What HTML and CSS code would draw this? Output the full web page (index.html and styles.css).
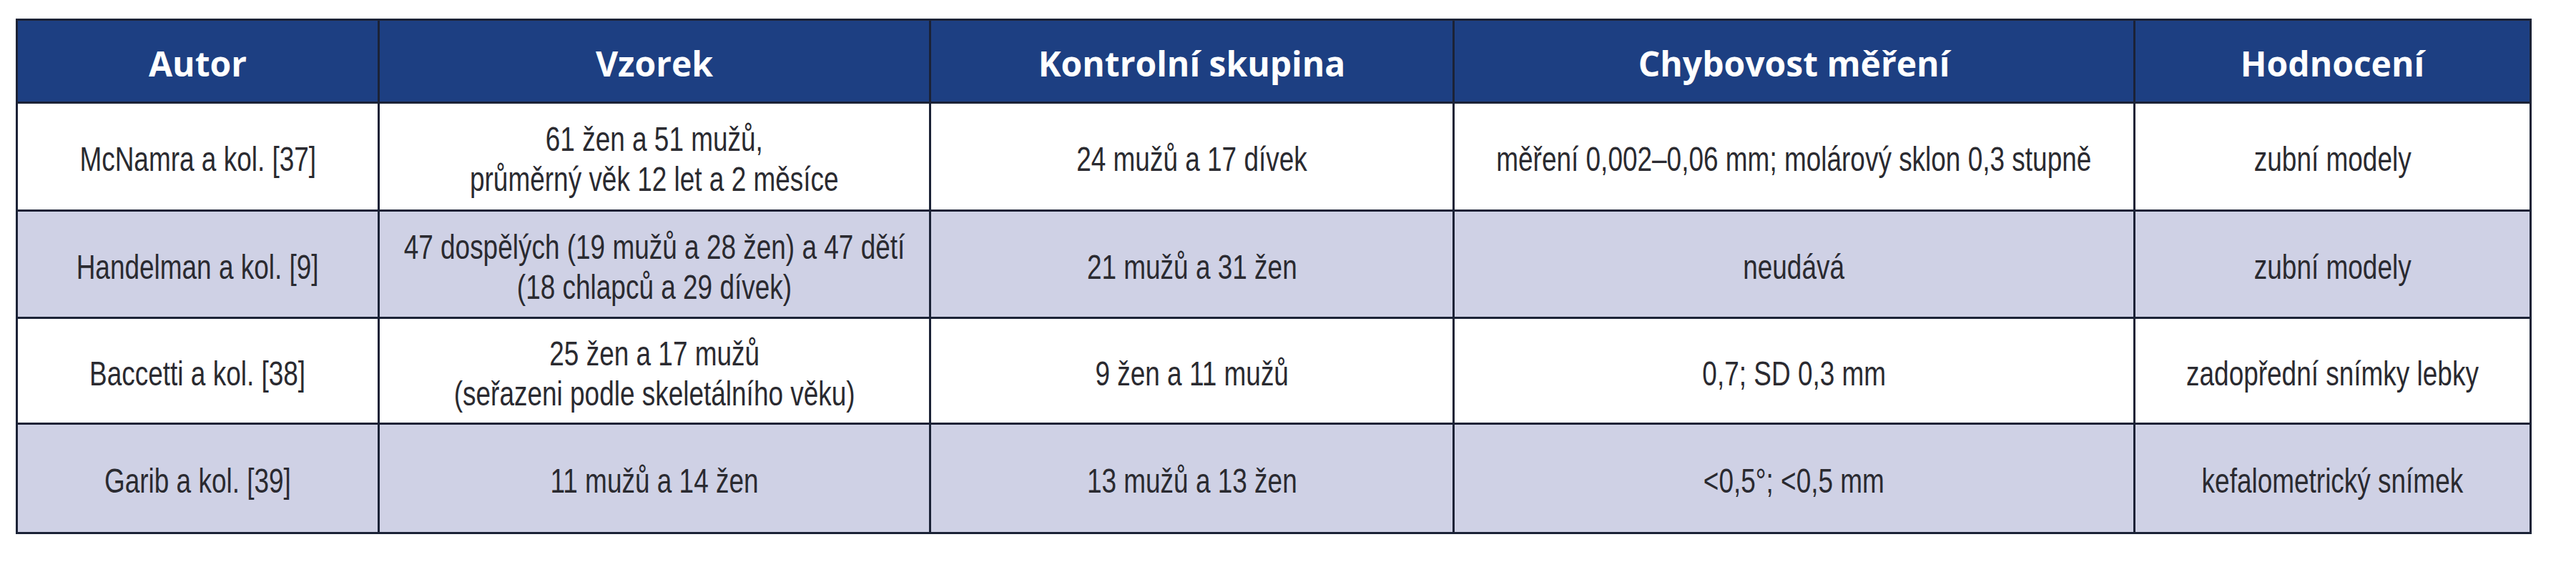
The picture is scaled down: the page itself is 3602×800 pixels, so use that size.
FILE: index.html
```html
<!DOCTYPE html>
<html lang="cs">
<head>
<meta charset="utf-8">
<title>Tabulka</title>
<link rel="stylesheet" href="styles.css">
</head>
<body>
<div class="page">
  <div class="table">
    <div class="cell head">Autor</div>
    <div class="cell head">Vzorek</div>
    <div class="cell head">Kontrolní skupina</div>
    <div class="cell head">Chybovost měření</div>
    <div class="cell head">Hodnocení</div>

    <div class="cell"><span class="txt">McNamra a kol. [37]</span></div>
    <div class="cell"><span class="txt">61 žen a 51 mužů,<br>průměrný věk 12 let a 2 měsíce</span></div>
    <div class="cell"><span class="txt">24 mužů a 17 dívek</span></div>
    <div class="cell"><span class="txt">měření 0,002–0,06 mm; molárový sklon 0,3 stupně</span></div>
    <div class="cell"><span class="txt">zubní modely</span></div>

    <div class="cell alt"><span class="txt">Handelman a kol. [9]</span></div>
    <div class="cell alt"><span class="txt">47 dospělých (19 mužů a 28 žen) a 47 dětí<br>(18 chlapců a 29 dívek)</span></div>
    <div class="cell alt"><span class="txt">21 mužů a 31 žen</span></div>
    <div class="cell alt"><span class="txt">neudává</span></div>
    <div class="cell alt"><span class="txt">zubní modely</span></div>

    <div class="cell"><span class="txt">Baccetti a kol. [38]</span></div>
    <div class="cell"><span class="txt">25 žen a 17 mužů<br>(seřazeni podle skeletálního věku)</span></div>
    <div class="cell"><span class="txt">9 žen a 11 mužů</span></div>
    <div class="cell"><span class="txt">0,7; SD 0,3 mm</span></div>
    <div class="cell"><span class="txt">zadopřední snímky lebky</span></div>

    <div class="cell alt"><span class="txt">Garib a kol. [39]</span></div>
    <div class="cell alt"><span class="txt">11 mužů a 14 žen</span></div>
    <div class="cell alt"><span class="txt">13 mužů a 13 žen</span></div>
    <div class="cell alt"><span class="txt">&lt;0,5°; &lt;0,5 mm</span></div>
    <div class="cell alt"><span class="txt">kefalometrický snímek</span></div>
  </div>
</div>
</body>
</html>
```

FILE: styles.css
```css
html, body {
  margin: 0;
  padding: 0;
  background: #ffffff;
}

.page {
  padding: 26px 0 0 22px;
}

.table {
  display: grid;
  grid-template-columns: 503px 768px 729px 949px 551px;
  grid-template-rows: 113px 148px 147px 145px 150px;
  gap: 3px;
  padding: 3px;
  width: max-content;
  background: #1b2236;
}

.cell {
  display: flex;
  align-items: center;
  justify-content: center;
  text-align: center;
  padding-top: 8px;
  box-sizing: border-box;
  overflow: visible;
  background: #ffffff;
  color: #2a2a30;
  font-family: "Liberation Sans", Arial, sans-serif;
  font-size: 48px;
  line-height: 56px;
  white-space: nowrap;
}

.txt {
  display: inline-block;
  flex: none;
  transform: scaleX(0.77);
  transform-origin: center center;
}

.cell.alt {
  background: #cfd1e5;
}

.cell.head {
  background: #1d3f82;
  color: #ffffff;
  font-family: "Open Sans", "Liberation Sans", sans-serif;
  font-weight: 700;
  font-size: 48px;
  line-height: 56px;
  padding-top: 6px;
}
```
